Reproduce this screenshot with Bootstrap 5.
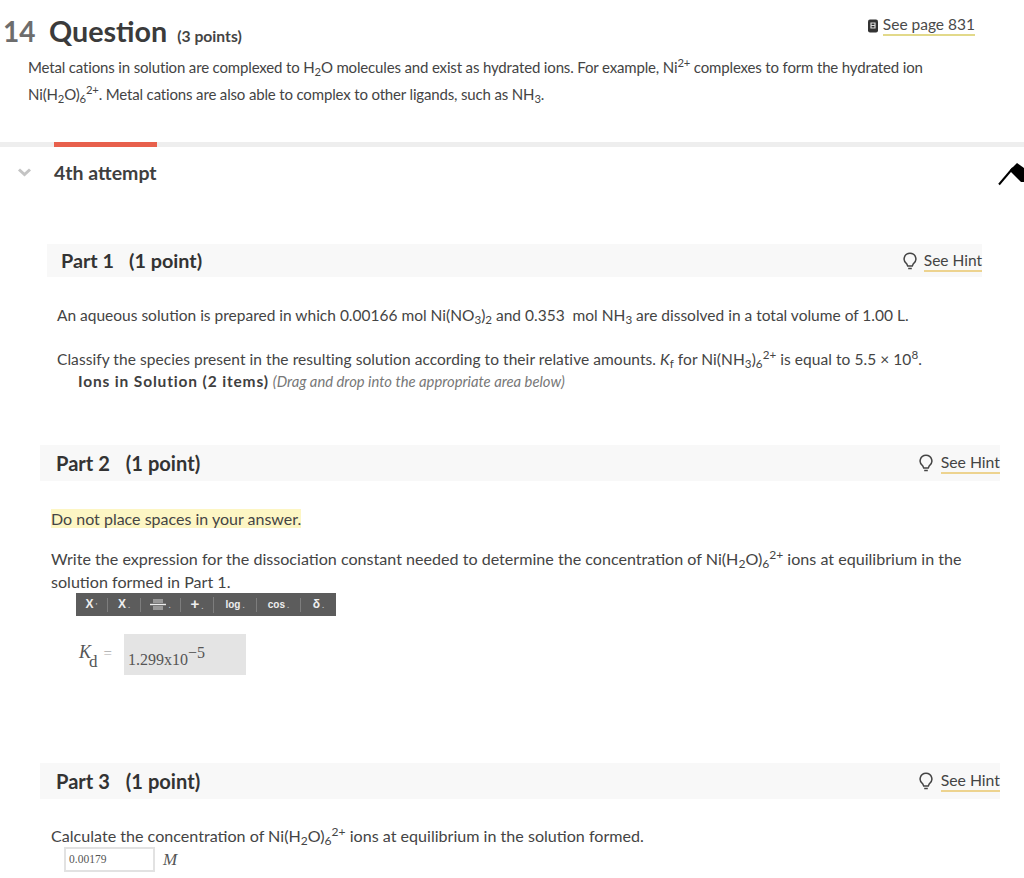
<!DOCTYPE html>
<html lang="en">
<head>
<meta charset="UTF-8">
<title>Question 14</title>
<link rel="stylesheet" href="https://cdn.jsdelivr.net/npm/bootstrap@5.3.2/dist/css/bootstrap.min.css">
<style>
body { background: #fff; color: #444; font-family: Lato, "Liberation Sans", sans-serif; font-size: 15.5px; overflow: hidden; }
sub, sup { font-size: 75%; }
.q-head { padding: 13px 49px 0 3px; height: 48px; }
.q-num { color: #6d6d6d; font-size: 28px; font-weight: 700; width: 46px; line-height: 36px; }
.q-title { color: #3b3b3b; font-size: 28.7px; font-weight: 700; line-height: 36px; }
.q-points { color: #444; font-size: 15.7px; font-weight: 700; margin-left: 10px; }
.page-wrap { padding-top: 2px; gap: 5px; }
.page-link-q { color: #4a4a4a; font-size: 15.5px; text-decoration: none; border-bottom: 2px solid #e2d98a; line-height: 19px; }
.q-stem { margin: 6px 0 0 28px; line-height: 27px; width: 960px; font-size: 15px; letter-spacing: -.155px; }
.tab-line { height: 5px; background: #eee; margin-top: 34px; }
.tab-mark { height: 5px; width: 103px; margin-left: 54px; background: #e8604c; }
.attempt-row { height: 51px; }
.attempt-chev { width: 54px; padding-left: 17px; }
.attempt-name { color: #3f3f3f; font-size: 19.5px; font-weight: 700; }
.flag-wrap { width: 26px; height: 26px; }
.part-bar { background: #f8f8f8; color: #333; font-size: 19.8px; font-weight: 700; }
.part-one { height: 33px; margin: 46px 42px 0 47px; padding-left: 14px; }
.part-two { height: 36px; margin: 53px 24px 0 40px; padding-left: 16px; font-size: 20.1px; }
.part-three { margin-top: 88px; }
.part-gap { margin-left: 15px; }
.part-two .part-gap { margin-left: 16px; }
.hint-lnk { color: #444; font-size: 15.5px; font-weight: 400; text-decoration: none; border-bottom: 2px solid #edd38f; line-height: 20px; margin-left: 7px; }
.part-two .hint-lnk { font-size: 15.8px; margin-left: 8px; }
.part-body-one { margin: 27px 0 0 57px; width: 900px; }
.txt-line { line-height: 22px; }
.classify-line { margin-top: 22px; letter-spacing: .055px; }
.drag-title { color: #3f3f3f; font-size: 15.5px; font-weight: 700; letter-spacing: .85px; margin-left: 21px; }
.drag-note { color: #777; font-size: 14.8px; font-style: italic; }
.part-body { margin-left: 51px; width: 930px; font-size: 16.1px; }
.body-top { margin-top: 27px; }
.body-top-c { margin-top: 26px; }
.spaced-line { margin-top: 17px; line-height: 23px; }
.note-mark { background: #fdf6c4; font-size: 16px; }
.tool-strip { background: #5c5c5c; color: #eee; width: 260px; height: 23px; margin-left: 25px; font-family: "Liberation Sans", sans-serif; font-weight: 700; font-size: 10px; display: grid; grid-template-columns: 32px 33px 40px 33px 43px 44px 35px; align-items: center; }
.tool-cell { line-height: 13px; border-right: 1px solid #7d7d7d; text-align: center; white-space: nowrap; }
.tool-cell:last-child { border-right: 0; }
.tool-cell i { font-style: normal; font-size: 8px; margin-left: 2px; color: #bbb; }
.tool-big { font-size: 12px; }
.tool-plus { font-size: 15px; }
.kd-row { margin: 18px 0 0 28px; font-family: "Liberation Serif", serif; color: #555; }
.kd-label { width: 45px; font-size: 18px; position: relative; top: -2px; }
.kd-label sub { font-size: 17px; font-style: normal; bottom: -.5em; margin-left: -2px; }
.kd-eq { color: #aaa; margin-left: 6px; font-size: 15px; }
.kd-box { background: #e4e4e4; width: 122px; height: 41px; padding: 14px 0 0 4px; font-size: 16px; line-height: 24px; }
.kd-box sup { font-size: 16px; top: -.45em; }
.conc-box { width: 91px; height: 25px; border: 2px solid #e2e2e2; font-family: "Liberation Serif", serif; font-size: 11.5px; line-height: 21px; padding-left: 3px; color: #555; margin-left: 13px; }
.conc-unit { font-family: "Liberation Serif", serif; font-style: italic; font-size: 17px; color: #555; margin-left: 8px; }
</style>
</head>
<body>

<div class="q-head d-flex align-items-start">
    <div class="d-flex align-items-baseline">
        <span class="q-num">14</span>
        <span class="q-title">Question</span>
        <span class="q-points">(3 points)</span>
    </div>
    <span class="page-wrap ms-auto d-flex align-items-center">
        <svg width="10" height="14" viewBox="0 0 10 14"><rect x="0" y="0.5" width="10" height="13" rx="2" fill="#333"/><path d="M3 4h4v5H3zM3 6.5h4" fill="none" stroke="#ddd" stroke-width="1.2"/></svg>
        <a class="page-link-q" href="#">See page 831</a>
    </span>
</div>

<p class="q-stem mb-0">Metal cations in solution are complexed to H<sub>2</sub>O molecules and exist as hydrated ions. For example, Ni<sup>2+</sup> complexes to form the hydrated ion<br>Ni(H<sub>2</sub>O)<sub>6</sub><sup>2+</sup>. Metal cations are also able to complex to other ligands, such as NH<sub>3</sub>.</p>

<div class="tab-line"><div class="tab-mark"></div></div>

<div class="attempt-row d-flex align-items-center">
    <span class="attempt-chev"><svg width="15" height="9" viewBox="0 0 15 9" class="d-block"><path d="M2 1.5l5.5 5 5.5-5" fill="none" stroke="#c4c4c4" stroke-width="3"/></svg></span>
    <span class="attempt-name">4th attempt</span>
    <span class="flag-wrap ms-auto"><svg width="26" height="26" viewBox="0 0 26 26" class="d-block"><path d="M1 24.5L15 8" fill="none" stroke="#000" stroke-width="2"/><path d="M12 10l7-7 7 5v14h-3L13 12z" fill="#000"/></svg></span>
</div>

<div class="part-bar part-one d-flex align-items-center">
    <span>Part 1</span><span class="part-gap">(1 point)</span>
    <span class="ms-auto d-flex align-items-center">
        <svg width="14" height="18" viewBox="0 0 14 18"><path d="M7 1.2a5.8 5.8 0 0 0-3.3 10.6l1 2.2h4.6l1-2.2A5.8 5.8 0 0 0 7 1.2zM5.2 16.5h3.6" fill="none" stroke="#444" stroke-width="1.5"/></svg>
        <a class="hint-lnk" href="#">See Hint</a>
    </span>
</div>

<div class="part-body-one">
    <div class="txt-line">An aqueous solution is prepared in which 0.00166 mol Ni(NO<sub>3</sub>)<sub>2</sub> and 0.353&nbsp; mol NH<sub>3</sub> are dissolved in a total volume of 1.00 L.</div>
    <div class="txt-line classify-line">Classify the species present in the resulting solution according to their relative amounts. <em>K</em><sub>f</sub> for Ni(NH<sub>3</sub>)<sub>6</sub><sup>2+</sup> is equal to 5.5 × 10<sup>8</sup>.</div>
    <div class="txt-line"><span class="drag-title">Ions in Solution (2 items)</span> <span class="drag-note">(Drag and drop into the appropriate area below)</span></div>
</div>

<div class="part-bar part-two d-flex align-items-center">
    <span>Part 2</span><span class="part-gap">(1 point)</span>
    <span class="ms-auto d-flex align-items-center">
        <svg width="14" height="18" viewBox="0 0 14 18"><path d="M7 1.2a5.8 5.8 0 0 0-3.3 10.6l1 2.2h4.6l1-2.2A5.8 5.8 0 0 0 7 1.2zM5.2 16.5h3.6" fill="none" stroke="#444" stroke-width="1.5"/></svg>
        <a class="hint-lnk" href="#">See Hint</a>
    </span>
</div>

<div class="part-body body-top">
    <div class="txt-line"><span class="note-mark">Do not place spaces in your answer.</span></div>
    <div class="spaced-line">Write the expression for the dissociation constant needed to determine the concentration of Ni(H<sub>2</sub>O)<sub>6</sub><sup>2+</sup> ions at equilibrium in the<br>solution formed in Part 1.</div>
    <div class="tool-strip">
        <span class="tool-cell tool-big">X<i>'</i></span>
        <span class="tool-cell tool-big">X<i>.</i></span>
        <span class="tool-cell"><svg width="16" height="11" viewBox="0 0 16 11"><path d="M3 0h10v4H3zM3 7h10v4H3z" fill="#999"/><path d="M0 5.5h16" stroke="#eee" stroke-width="1.4"/></svg><i>.</i></span>
        <span class="tool-cell tool-plus">+<i>.</i></span>
        <span class="tool-cell">log<i>.</i></span>
        <span class="tool-cell">cos<i>.</i></span>
        <span class="tool-cell tool-big">δ<i>.</i></span>
    </div>
    <div class="kd-row d-flex align-items-center">
        <span class="kd-label"><em>K</em><sub>d</sub><span class="kd-eq">=</span></span>
        <div class="kd-box">1.299x10<sup>−5</sup></div>
    </div>
</div>

<div class="part-bar part-two part-three d-flex align-items-center">
    <span>Part 3</span><span class="part-gap">(1 point)</span>
    <span class="ms-auto d-flex align-items-center">
        <svg width="14" height="18" viewBox="0 0 14 18"><path d="M7 1.2a5.8 5.8 0 0 0-3.3 10.6l1 2.2h4.6l1-2.2A5.8 5.8 0 0 0 7 1.2zM5.2 16.5h3.6" fill="none" stroke="#444" stroke-width="1.5"/></svg>
        <a class="hint-lnk" href="#">See Hint</a>
    </span>
</div>

<div class="part-body body-top-c">
    <div class="txt-line">Calculate the concentration of Ni(H<sub>2</sub>O)<sub>6</sub><sup>2+</sup> ions at equilibrium in the solution formed.</div>
    <div class="d-flex align-items-center">
        <div class="conc-box">0.00179</div><span class="conc-unit">M</span>
    </div>
</div>

<script src="https://cdn.jsdelivr.net/npm/bootstrap@5.3.2/dist/js/bootstrap.bundle.min.js"></script>
</body>
</html>
